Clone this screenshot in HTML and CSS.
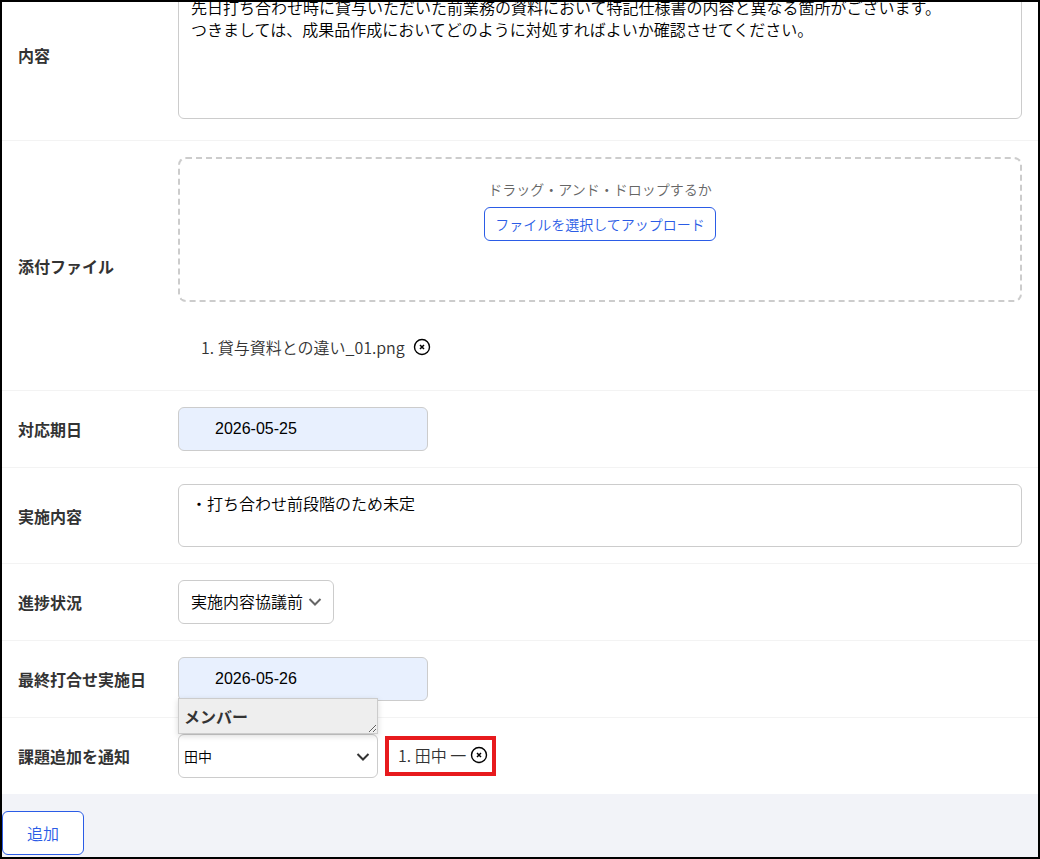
FILE: index.html
```html
<!DOCTYPE html>
<html lang="ja">
<head>
<meta charset="utf-8">
<meta name="viewport" content="width=device-width, initial-scale=1">
<title>課題追加</title>
<link rel="stylesheet" href="styles.css">
</head>
<body>
<svg class="sprite" aria-hidden="true">
  <symbol id="remove" viewBox="0 0 18 18">
    <circle cx="9" cy="9" r="7.5" fill="none" stroke="currentColor" stroke-width="1.4"/>
    <path d="M7 7l4 4M11 7l-4 4" fill="none" stroke="currentColor" stroke-width="1.5"/>
  </symbol>
  <symbol id="chevron" viewBox="0 0 14 10">
    <path d="M1.500 2l5.500 5.500L12.500 2" fill="none" stroke="currentColor" stroke-width="2"/>
  </symbol>
</svg>
<form class="frame">
  <div class="row row-first">
    <label class="label" for="content">内容</label>
    <div class="field">
      <textarea class="control area area-tall" id="content">先日打ち合わせ時に貸与いただいた前業務の資料において特記仕様書の内容と異なる箇所がございます。
つきましては、成果品作成においてどのように対処すればよいか確認させてください。</textarea>
    </div>
  </div>
  <div class="row">
    <span class="label">添付ファイル</span>
    <div class="field">
      <div class="dropzone">
        <span>ドラッグ・アンド・ドロップするか</span>
        <button class="button upload" type="button">ファイルを選択してアップロード</button>
      </div>
      <div class="item file">
        <span>1. 貸与資料との違い_01.png</span>
        <button class="remove" type="button" aria-label="削除"><svg><use href="#remove"/></svg></button>
      </div>
    </div>
  </div>
  <div class="row">
    <label class="label" for="due">対応期日</label>
    <div class="field"><input class="control date" id="due" type="text" value="2026-05-25"></div>
  </div>
  <div class="row">
    <label class="label" for="work">実施内容</label>
    <div class="field"><textarea class="control area" id="work">・打ち合わせ前段階のため未定</textarea></div>
  </div>
  <div class="row">
    <label class="label" for="status">進捗状況</label>
    <div class="field">
      <div class="select-wrap status">
        <select class="control select" id="status"><option>実施内容協議前</option></select>
        <svg class="chevron"><use href="#chevron"/></svg>
      </div>
    </div>
  </div>
  <div class="row">
    <label class="label" for="meeting">最終打合せ実施日</label>
    <div class="field"><input class="control date" id="meeting" type="text" value="2026-05-26"></div>
  </div>
  <div class="row">
    <label class="label" for="notify">課題追加を通知</label>
    <div class="field notify">
      <div class="select-wrap member">
        <select class="control select" id="notify"><option>田中</option></select>
        <svg class="chevron"><use href="#chevron"/></svg>
        <div class="popup">メンバー</div>
      </div>
      <div class="item marked">
        <span>1. 田中 一</span>
        <button class="remove" type="button" aria-label="削除"><svg><use href="#remove"/></svg></button>
      </div>
    </div>
  </div>
  <div class="footer"><button class="button submit" type="submit">追加</button></div>
</form>
</body>
</html>
```

FILE: styles.css
```css
* {
  box-sizing: border-box;
}

body {
  margin: 0;
  color: #333;
  font: 350 16px/24px "Noto Sans CJK JP", sans-serif;
}

.sprite {
  display: none;
}

.frame {
  display: flex;
  flex-direction: column;
  min-height: 100vh;
  border: 2px solid #000;
  overflow: hidden;
  background: #fff;
}

.row {
  display: grid;
  grid-template-columns: 160px minmax(0, 1fr);
  align-items: center;
  padding: 16px;
  border-bottom: 1px solid #f3f3f3;
}

.row-first {
  margin-top: -28px;
  padding-bottom: 21px;
}

.row:nth-last-child(2) {
  border-bottom: 0;
}

.label {
  font-weight: 700;
}

.control {
  display: block;
  width: 100%;
  height: 44px;
  margin: 0;
  border: 1px solid #ccc;
  border-radius: 6px;
  background: #fff;
  color: #000;
  font: 350 16px/22px "Noto Sans CJK JP", sans-serif;
}

.area {
  height: 63px;
  padding: 7px 12px;
  resize: none;
  overflow: hidden;
}

.area-tall {
  height: 129px;
  padding-top: 5px;
}

.date {
  max-width: 250px;
  padding: 0 12px 0 36px;
  background: #e8f0fe;
  font-family: "Liberation Sans", Arial, sans-serif;
}

.dropzone {
  display: flex;
  flex-direction: column;
  align-items: center;
  gap: 8px;
  padding: 20px 16px 59px;
  border: 2px dashed #ccc;
  border-radius: 8px;
  color: #666;
  font-size: 14px;
  line-height: 20px;
}

.button {
  border: 1px solid #2b5ce6;
  border-radius: 6px;
  background: #fff;
  color: #2b5ce6;
  font: 350 16px/24px "Noto Sans CJK JP", sans-serif;
}

.upload {
  height: 34px;
  padding: 0 10px;
  font-size: 14px;
}

.item {
  display: flex;
  align-items: center;
  gap: 8px;
}

.file {
  padding: 33px 23px 15px;
}

.remove {
  display: flex;
  padding: 0;
  border: 0;
  background: none;
  color: #000;
}

.remove svg {
  width: 18px;
  height: 18px;
}

.select-wrap {
  position: relative;
}

.select {
  appearance: none;
  padding: 0 28px 2px 12px;
}

.status {
  width: 156px;
}

.member {
  width: 200px;
}

.member .select {
  padding: 0 28px 0 5px;
  font-size: 14px;
}

.chevron {
  position: absolute;
  top: 17px;
  right: 12px;
  width: 14px;
  height: 10px;
  color: #666;
  pointer-events: none;
}

.member .chevron {
  top: 18px;
  right: 8px;
  color: #333;
}

.popup {
  position: absolute;
  bottom: 100%;
  left: 0;
  width: 100%;
  height: 36px;
  padding: 5px;
  border: 1px solid #ccc;
  overflow: hidden;
  resize: both;
  background: #eee;
  box-shadow: 0 2px 6px rgba(0, 0, 0, 0.15);
  font-weight: 700;
}

.notify {
  display: flex;
  align-items: center;
  gap: 7px;
}

.marked {
  gap: 4px;
  padding: 3px 4px 5px 9px;
  border: 4px solid #e71a1d;
}

.footer {
  flex: 1;
  padding: 17px 0 2px;
  background: #f2f3f8;
}

.submit {
  height: 44px;
  padding: 0 24px;
}
```
